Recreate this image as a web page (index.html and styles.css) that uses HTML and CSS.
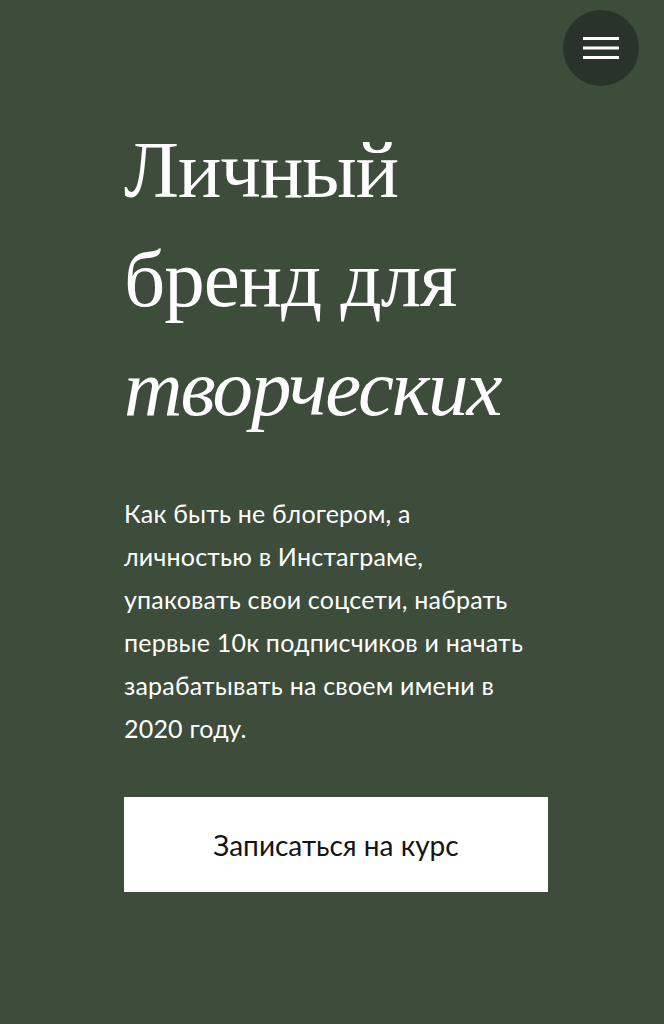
FILE: index.html
```html
<!DOCTYPE html>
<html lang="ru">
<head>
<meta charset="utf-8">
<link rel="stylesheet" href="styles.css">
</head>
<body>
<div class="page">
  <button class="menu" aria-label="Меню">
    <svg width="36" height="24" viewBox="0 0 36 24"><rect x="0" y="1" width="36" height="3" fill="#fff"/><rect x="0" y="10.5" width="36" height="3" fill="#fff"/><rect x="0" y="20" width="36" height="3" fill="#fff"/></svg>
  </button>
  <main class="hero">
    <h1 class="title">Личный<br>бренд для<br><em>творческих</em></h1>
    <p class="lead">Как быть не блогером, а личностью в Инстаграме, упаковать свои соцсети, набрать первые 10к подписчиков и начать зарабатывать на своем имени в 2020 году.</p>
    <a class="cta" href="#">Записаться на курс</a>
  </main>
</div>
</body>
</html>
```
FILE: styles.css
```css
html, body {
  margin: 0;
  padding: 0;
  background: #3d4c3b;
}
.page {
  position: relative;
  width: 664px;
  height: 1024px;
  background: #3d4c3b;
  overflow: hidden;
}
.menu {
  position: absolute;
  top: 10px;
  right: 25px;
  width: 76px;
  height: 76px;
  border-radius: 50%;
  border: none;
  background: #2a3329;
  display: flex;
  align-items: center;
  justify-content: center;
  padding: 0;
}
.hero {
  padding: 116px 116px 0 124px;
  display: flex;
  flex-direction: column;
}
.title {
  margin: 0;
  font-family: "Liberation Serif", "DejaVu Serif", serif;
  font-weight: normal;
  font-size: 81px;
  line-height: 109px;
  color: #fff;
  letter-spacing: -1px;
}
.title em {
  font-style: italic;
  letter-spacing: -2px;
}
.lead {
  margin: 49px 0 0 0;
  font-family: "Lato", "Noto Sans", sans-serif;
  font-size: 25px;
  line-height: 43px;
  color: #fff;
  width: 410px;
  letter-spacing: 0.2px;
}
.cta {
  margin-top: 47px;
  width: 424px;
  height: 95px;
  background: #fff;
  color: #141414;
  display: flex;
  align-items: center;
  justify-content: center;
  font-family: "Lato", "Noto Sans", sans-serif;
  font-size: 28px;
  text-decoration: none;
}
```
